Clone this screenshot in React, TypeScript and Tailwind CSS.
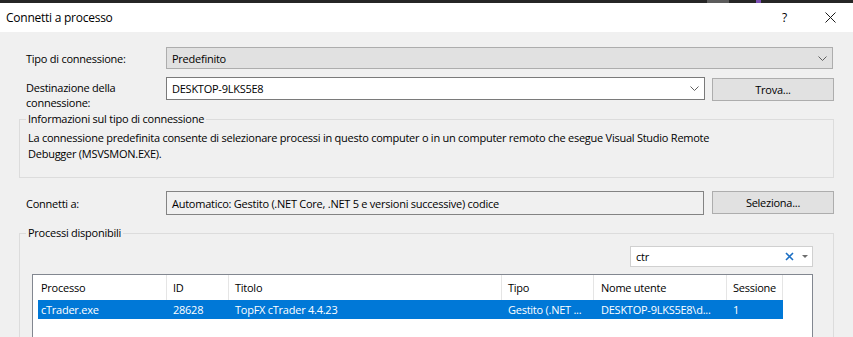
import React from 'react';

const cols = [
  { name: 'Processo', value: 'cTrader.exe', w: 'w-[128px] pl-[3px]' },
  { name: 'ID', value: '28628', w: 'w-[62px] pl-[6px] border-l' },
  { name: 'Titolo', value: 'TopFX cTrader 4.4.23', w: 'w-[273px] pl-[6px] border-l' },
  { name: 'Tipo', value: 'Gestito (.NET ...', w: 'w-[92px] pl-[6px] border-l' },
  { name: 'Nome utente', value: 'DESKTOP-9LKS5E8\\d...', w: 'w-[133px] pl-[7px] border-l' },
  { name: 'Sessione', value: '1', w: 'w-[57px] pl-[6px] border-l border-r' },
];

function Chevron() {
  return (
    <svg width="9" height="5" viewBox="0 0 9 5" className="shrink-0">
      <polyline points="0.5,0.5 4.5,4.5 8.5,0.5" fill="none" stroke="#5f5f5f" strokeWidth="1" />
    </svg>
  );
}

function Button({ label }: { label: string }) {
  return (
    <div className="w-[122px] h-[23px] border border-[#adadad] bg-[#e1e1e1] flex items-center justify-center">
      {label}
    </div>
  );
}

export default function App() {
  return (
    <div className="w-[853px] h-[337px] overflow-hidden bg-[#f0f0f0] font-['Open_Sans','Noto_Sans',sans-serif] text-[11px] leading-[15px] tracking-[-0.25px] text-black">
      {/* window strip above dialog */}
      <div className="h-[3px] bg-[#262626] flex">
        <div className="ml-[707px] w-[22px] bg-[#5c5c5c]" />
        <div className="ml-[27px] w-[5px] bg-[#7b4fb3]" />
      </div>

      {/* title bar */}
      <div className="h-[29px] bg-white flex items-center">
        <span className="ml-[6px] text-[12px]">Connetti a processo</span>
        <span className="ml-auto text-[12px]">?</span>
        <svg width="11" height="11" viewBox="0 0 11 11" className="ml-[38px] mr-[17px]">
          <path d="M0.5 0.5 L10.5 10.5 M10.5 0.5 L0.5 10.5" stroke="#1a1a1a" strokeWidth="1" />
        </svg>
      </div>

      {/* tipo di connessione */}
      <div className="mt-[15px] flex items-center h-[22px]">
        <div className="w-[166px] pl-[26px]">Tipo di connessione:</div>
        <div className="w-[667px] h-[22px] border border-[#adadad] bg-[#e1e1e1] flex items-center justify-between pl-[5px] pr-[5px]">
          <span>Predefinito</span>
          <Chevron />
        </div>
      </div>

      {/* destinazione */}
      <div className="mt-[8px] flex h-[24px]">
        <div className="w-[166px] pl-[26px] pt-[3px]">
          Destinazione della
          <br />
          connessione:
        </div>
        <div className="w-[539px] h-[23px] border border-[#7a7a7a] bg-white flex items-center justify-between pl-[5px] pr-[5px]">
          <span>DESKTOP-9LKS5E8</span>
          <Chevron />
        </div>
        <div className="ml-[7px] mt-[1px]">
          <Button label="Trova..." />
        </div>
      </div>

      {/* informazioni */}
      <fieldset className="mt-[11px] ml-[19px] w-[815px] h-[66px] border border-[#dcdcdc]">
        <legend className="ml-[6px] px-[2px] leading-[14px]">Informazioni sul tipo di connessione</legend>
        <p className="pl-[8px] pt-[4px] leading-[16px]">
          La connessione predefinita consente di selezionare processi in questo computer o in un computer remoto che esegue Visual Studio Remote
          <br />
          Debugger (MSVSMON.EXE).
        </p>
      </fieldset>

      {/* connetti a */}
      <div className="mt-[13px] flex items-center h-[24px]">
        <div className="w-[166px] pl-[26px]">Connetti a:</div>
        <div className="w-[538px] h-[24px] border border-[#838383] flex items-center pl-[5px]">
          Automatico: Gestito (.NET Core, .NET 5 e versioni successive) codice
        </div>
        <div className="ml-[8px] self-start">
          <Button label="Seleziona..." />
        </div>
      </div>

      {/* processi */}
      <fieldset className="mt-[11px] ml-[19px] w-[815px] h-[140px] border border-[#dcdcdc]">
        <legend className="ml-[6px] px-[2px] leading-[14px]">Processi disponibili</legend>
        <div className="mt-[6px] flex justify-end pr-[20px]">
          <div className="w-[183px] h-[21px] border border-[#d0d0d0] bg-white flex items-center pl-[5px] pr-[4px]">
            <span>ctr</span>
            <svg width="9" height="9" viewBox="0 0 9 9" className="ml-auto">
              <path d="M1 1 L8 8 M8 1 L1 8" stroke="#1c6fc4" strokeWidth="1.6" />
            </svg>
            <svg width="6" height="4" viewBox="0 0 6 4" className="ml-[8px]">
              <polygon points="0,0 6,0 3,3" fill="#6d6d6d" />
            </svg>
          </div>
        </div>
        <div className="mt-[7px] ml-[12px] w-[781px] h-[80px] border border-[#828790] bg-white pl-[5px]">
          <div className="flex h-[25px] items-center">
            {cols.map((c) => (
              <div key={c.name} className={`${c.w} h-full flex items-center border-[#e5e5e5] whitespace-nowrap`}>
                {c.name}
              </div>
            ))}
          </div>
          <div className="flex h-[19px] w-[745px] items-center bg-[#0078d7] text-white">
            {cols.map((c) => (
              <div key={c.name} className={`${c.w} border-transparent whitespace-nowrap overflow-hidden`}>
                {c.value}
              </div>
            ))}
          </div>
        </div>
      </fieldset>
    </div>
  );
}
